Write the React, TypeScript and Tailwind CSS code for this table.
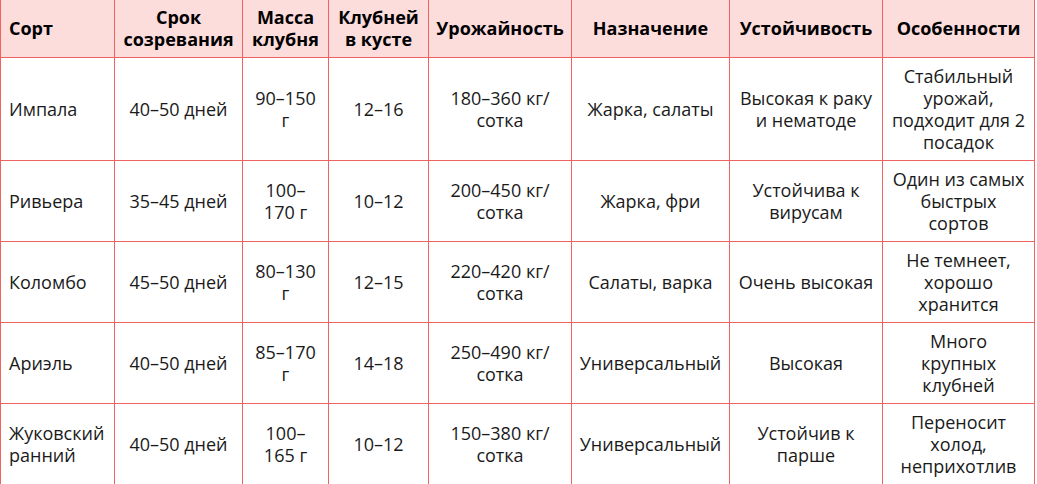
import React from "react";

const headers = [
  "Сорт",
  "Срок созревания",
  "Масса клубня",
  "Клубней в кусте",
  "Урожайность",
  "Назначение",
  "Устойчивость",
  "Особенности",
];

const rows: string[][] = [
  ["Импала", "40–50 дней", "90–150 г", "12–16", "180–360 кг/сотка", "Жарка, салаты", "Высокая к раку и нематоде", "Стабильный урожай, подходит для 2 посадок"],
  ["Ривьера", "35–45 дней", "100–170 г", "10–12", "200–450 кг/сотка", "Жарка, фри", "Устойчива к вирусам", "Один из самых быстрых сортов"],
  ["Коломбо", "45–50 дней", "80–130 г", "12–15", "220–420 кг/сотка", "Салаты, варка", "Очень высокая", "Не темнеет, хорошо хранится"],
  ["Ариэль", "40–50 дней", "85–170 г", "14–18", "250–490 кг/сотка", "Универсальный", "Высокая", "Много крупных клубней"],
  ["Жуковский ранний", "40–50 дней", "100–165 г", "10–12", "150–380 кг/сотка", "Универсальный", "Устойчив к парше", "Переносит холод, неприхотлив"],
];

export default function App() {
  return (
    <div className="w-[1037px] h-[484px] overflow-hidden bg-white" style={{ fontFamily: '"Open Sans", "Noto Sans", sans-serif' }}>
      <div className="grid grid-cols-[114px_128px_86px_100px_143px_158px_153px_152px] w-[1035px] border-l border-[#ef6461] -mt-px text-[18px] leading-[22px] text-[#1a1a1a]">
        {headers.map((h, i) => (
          <div
            key={h}
            className={`bg-[#fddcdc] border-r border-b border-[#ef6461] px-2 py-[7px] font-bold text-black flex items-center ${i === 0 ? "justify-start text-left" : "justify-center text-center"}`}
          >
            {h}
          </div>
        ))}
        {rows.map((r, ri) =>
          r.map((c, ci) => (
            <div
              key={`${ri}-${ci}`}
              className={`border-r border-b border-[#ef6461] px-2 py-[7px] flex items-center ${ci === 0 ? "justify-start text-left" : "justify-center text-center"}`}
            >
              {c}
            </div>
          ))
        )}
      </div>
    </div>
  );
}
